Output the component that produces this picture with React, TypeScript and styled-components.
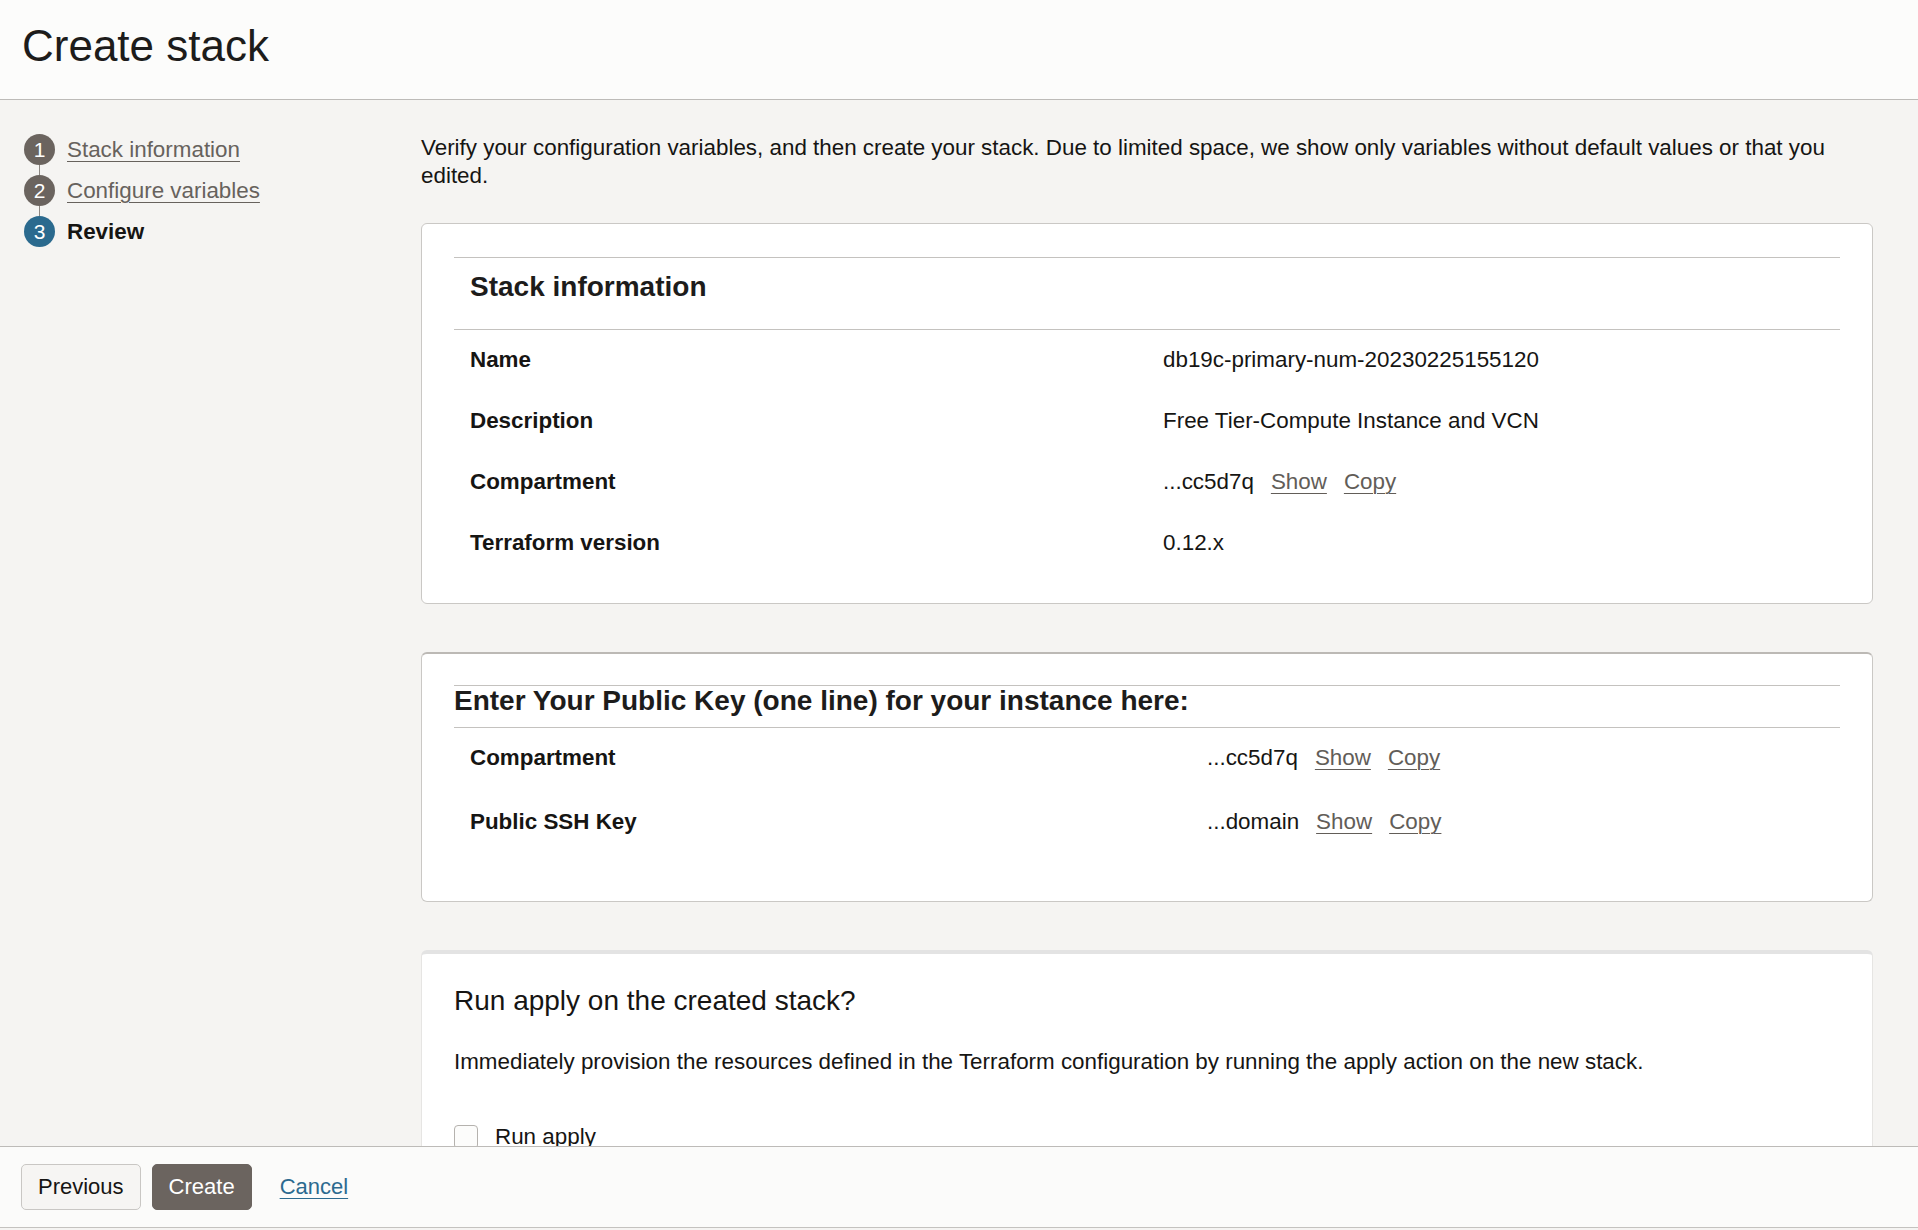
import React from 'react';
import styled, { createGlobalStyle } from 'styled-components';

const GlobalStyle = createGlobalStyle`
  html, body {
    margin: 0;
    padding: 0;
    height: 100%;
  }
  body {
    font-family: "Liberation Sans", Arial, Helvetica, sans-serif;
    color: #161513;
    background: #f5f4f2;
  }
  #root {
    height: 100%;
  }
`;

const Page = styled.div`
  height: 100vh;
  display: flex;
  flex-direction: column;
  overflow: hidden;
`;

const Header = styled.header`
  flex: 0 0 auto;
  height: 100px;
  box-sizing: border-box;
  padding: 24px 0 0 22px;
  background: #fcfcfb;
  border-bottom: 1px solid #bdbbb8;
`;

const Title = styled.h1`
  margin: 0;
  font-size: 44px;
  line-height: 44px;
  font-weight: 400;
  color: #1d1c1b;
`;

const Body = styled.div`
  flex: 1 1 auto;
  min-height: 0;
  display: grid;
  grid-template-columns: 421px 1fr;
  padding-right: 45px;
  overflow: hidden;
`;

const Steps = styled.ol`
  list-style: none;
  margin: 0;
  padding: 29px 0 0 24px;
`;

const Step = styled.li`
  display: flex;
  align-items: center;
  gap: 12px;
  height: 41px;
  font-size: 22.4px;
`;

const StepDot = styled.span<{ $current?: boolean; $last?: boolean }>`
  position: relative;
  flex: 0 0 31px;
  width: 31px;
  height: 31px;
  border-radius: 50%;
  background: ${p => (p.$current ? '#2b6a8e' : '#6b645f')};
  color: #fff;
  font-size: 21px;
  line-height: 31px;
  text-align: center;

  &::after {
    content: '';
    display: ${p => (p.$last ? 'none' : 'block')};
    position: absolute;
    left: 15px;
    top: 31px;
    width: 1px;
    height: 10px;
    background: #8c8782;
  }
`;

const StepLink = styled.a`
  color: #67625d;
  text-decoration: underline;
  text-underline-offset: 4px;
  text-decoration-thickness: 1px;
  cursor: pointer;
`;

const StepCurrent = styled.span`
  font-weight: 700;
  color: #161513;
`;

const Content = styled.main`
  padding-top: 34px;
  min-width: 0;
`;

const Intro = styled.p`
  margin: 0 0 33px;
  font-size: 22.4px;
  line-height: 28px;
  color: #161513;
`;

const Card = styled.section<{ $variant?: 'plain' | 'strong' | 'soft' }>`
  background: #fff;
  border: 1px solid #cac8c5;
  border-radius: 6px;
  padding: 33px 32px 29px;
  margin-bottom: 48px;

  ${p =>
    p.$variant === 'strong' &&
    `
    border-top: 2px solid #bcb9b5;
    padding-top: 31px;
    padding-bottom: 45px;
  `}

  ${p =>
    p.$variant === 'soft' &&
    `
    border-color: #e6e5e3;
    border-top: 4px solid #e3e3e3;
    padding-top: 29px;
    margin-bottom: 0;
  `}
`;

const SectionHead = styled.h2<{ $tight?: boolean }>`
  margin: 0;
  border-top: 1px solid #c4c2bf;
  border-bottom: 1px solid #c4c2bf;
  font-size: 28px;
  font-weight: 700;
  color: #1d1c1b;
  line-height: ${p => (p.$tight ? '30px' : '36px')};
  padding: ${p => (p.$tight ? '0 0 11px' : '11px 16px 24px')};
`;

const Rows = styled.div<{ $cols: string }>`
  display: grid;
  grid-template-columns: ${p => p.$cols};
`;

const Cell = styled.div<{ $label?: boolean; $roomy?: boolean }>`
  padding: ${p => (p.$roomy ? '16px 16px 20px' : '16px 16px 17px')};
  font-size: 22.4px;
  line-height: 28px;
  font-weight: ${p => (p.$label ? 700 : 400)};
  color: #161513;
  white-space: nowrap;
`;

const InlineLink = styled.a`
  margin-left: 17px;
  color: #625d58;
  text-decoration: underline;
  text-underline-offset: 4px;
  text-decoration-thickness: 1px;
  cursor: pointer;
`;

const ApplyTitle = styled.h2`
  margin: 0 0 29px;
  font-size: 28px;
  line-height: 36px;
  font-weight: 400;
  color: #161513;
`;

const ApplyText = styled.p`
  margin: 0 0 47px;
  font-size: 22.4px;
  line-height: 28px;
`;

const CheckRow = styled.label`
  display: flex;
  align-items: center;
  gap: 17px;
  font-size: 22.4px;
  line-height: 28px;
`;

const CheckBox = styled.span`
  width: 24px;
  height: 24px;
  box-sizing: border-box;
  border: 1px solid #b5b2ae;
  border-radius: 4px;
  background: #fcfcfb;
`;

const Footer = styled.footer`
  flex: 0 0 82px;
  box-sizing: border-box;
  margin-bottom: 2px;
  display: flex;
  align-items: center;
  gap: 11px;
  padding-left: 21px;
  background: #fbfbfa;
  border-top: 1px solid #bdbbb8;
  border-bottom: 1px solid #c4c2bf;
`;

const Button = styled.button<{ $primary?: boolean }>`
  height: 46px;
  padding: 0 16px;
  border-radius: 5px;
  font-family: inherit;
  font-size: 22px;
  border: 1px solid ${p => (p.$primary ? '#6b645f' : '#c9c7c4')};
  background: ${p => (p.$primary ? '#6b645f' : '#f6f5f3')};
  color: ${p => (p.$primary ? '#ffffff' : '#161513')};
  cursor: pointer;
`;

const CancelLink = styled.a`
  margin-left: 17px;
  font-size: 22px;
  color: #2c6a8f;
  text-decoration: underline;
  text-underline-offset: 4px;
  text-decoration-thickness: 1px;
  cursor: pointer;
`;

type Row = { label: string; value: string; links?: boolean };

const stackRows: Row[] = [
  { label: 'Name', value: 'db19c-primary-num-20230225155120' },
  { label: 'Description', value: 'Free Tier-Compute Instance and VCN' },
  { label: 'Compartment', value: '...cc5d7q', links: true },
  { label: 'Terraform version', value: '0.12.x' },
];

const keyRows: Row[] = [
  { label: 'Compartment', value: '...cc5d7q', links: true },
  { label: 'Public SSH Key', value: '...domain', links: true },
];

const ValueRows: React.FC<{ rows: Row[]; cols: string; roomy?: boolean }> = ({ rows, cols, roomy }) => (
  <Rows $cols={cols}>
    {rows.map(r => (
      <React.Fragment key={r.label}>
        <Cell $label $roomy={roomy}>{r.label}</Cell>
        <Cell $roomy={roomy}>
          {r.value}
          {r.links && (
            <>
              <InlineLink>Show</InlineLink>
              <InlineLink>Copy</InlineLink>
            </>
          )}
        </Cell>
      </React.Fragment>
    ))}
  </Rows>
);

export default function App() {
  return (
    <>
      <GlobalStyle />
      <Page>
        <Header>
          <Title>Create stack</Title>
        </Header>

        <Body>
          <Steps>
            <Step>
              <StepDot>1</StepDot>
              <StepLink>Stack information</StepLink>
            </Step>
            <Step>
              <StepDot>2</StepDot>
              <StepLink>Configure variables</StepLink>
            </Step>
            <Step>
              <StepDot $current $last>3</StepDot>
              <StepCurrent>Review</StepCurrent>
            </Step>
          </Steps>

          <Content>
            <Intro>
              Verify your configuration variables, and then create your stack. Due to limited space, we show only
              variables without default values or that you edited.
            </Intro>

            <Card>
              <SectionHead>Stack information</SectionHead>
              <ValueRows rows={stackRows} cols="1fr 1fr" />
            </Card>

            <Card $variant="strong">
              <SectionHead $tight>Enter Your Public Key (one line) for your instance here:</SectionHead>
              <ValueRows rows={keyRows} cols="737px 1fr" roomy />
            </Card>

            <Card $variant="soft">
              <ApplyTitle>Run apply on the created stack?</ApplyTitle>
              <ApplyText>
                Immediately provision the resources defined in the Terraform configuration by running the apply action
                on the new stack.
              </ApplyText>
              <CheckRow>
                <CheckBox />
                Run apply
              </CheckRow>
            </Card>
          </Content>
        </Body>

        <Footer>
          <Button>Previous</Button>
          <Button $primary>Create</Button>
          <CancelLink>Cancel</CancelLink>
        </Footer>
      </Page>
    </>
  );
}
